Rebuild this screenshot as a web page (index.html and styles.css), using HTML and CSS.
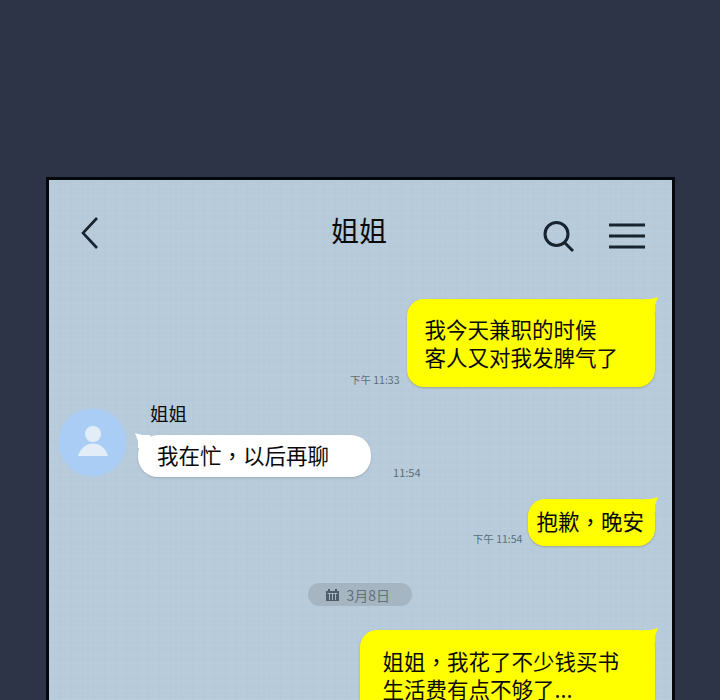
FILE: index.html
```html
<!DOCTYPE html>
<html lang="zh-CN">
<head>
  <meta charset="UTF-8" />
  <title>姐姐</title>
  <link rel="stylesheet" href="styles.css">
</head>
<body>
  <div class="phone">
    <div class="topbar">
      <svg class="back" width="20" height="34" viewBox="0 0 20 34">
        <path d="M17 2 L3 17 L17 32" />
      </svg>
      <div class="title">姐姐</div>
      <svg class="search" width="32" height="34" viewBox="0 0 32 34">
        <circle cx="13.5" cy="14" r="11.5" />
        <path d="M22 23 L30 31" />
      </svg>
      <svg class="menu" width="36" height="26" viewBox="0 0 36 26">
        <path d="M0 2 H36 M0 13 H36 M0 24 H36" />
      </svg>
    </div>

    <div class="chat">
      <div class="row mine first">
        <span class="time">下午 11:33</span>
        <div class="bubble yellow b1">我今天兼职的时候<br>客人又对我发脾气了</div>
      </div>

      <div class="row friend">
        <div class="avatar">
          <svg width="30" height="31" viewBox="0 0 30 31">
            <circle cx="15" cy="8" r="8" />
            <path d="M0 30 C2 22 9 17.5 15 17.5 C21 17.5 28 22 30 30 Z" />
          </svg>
        </div>
        <div class="friend-col">
          <div class="name">姐姐</div>
          <div class="friend-line">
            <div class="bubble white b2">我在忙<span class="punct" lang="zh-TW">&#xFF0C;</span>以后再聊</div>
            <span class="time">11:54</span>
          </div>
        </div>
      </div>

      <div class="row mine third">
        <span class="time">下午 11:54</span>
        <div class="bubble yellow b3">抱歉<span class="punct" lang="zh-TW">&#xFF0C;</span>晚安</div>
      </div>

      <div class="date-row">
        <div class="date">
          <svg width="13" height="12" viewBox="0 0 13 12">
            <path d="M0 2 H13 V12 H0 Z M2 0 H4 V2 H2 Z M9 0 H11 V2 H9 Z" />
            <path class="cut" d="M1.5 4.5 H11.5 M3.5 4.5 V11 M6.5 4.5 V11 M9.5 4.5 V11" />
          </svg>
          <span>3月8日</span>
        </div>
      </div>

      <div class="row mine last">
        <div class="bubble yellow b4">姐姐<span class="punct" lang="zh-TW">&#xFF0C;</span>我花了不少钱买书<br>生活费有点不够了...</div>
      </div>
    </div>
  </div>
</body>
</html>
```

FILE: styles.css
```css
html, body {
  margin: 0;
  height: 700px;
  overflow: hidden;
}

body {
  background: #2e3448;
  font-family: "Noto Sans CJK SC", "Noto Sans", sans-serif;
  color: #0a0a0a;
}

.phone {
  margin: 177px 0 0 46px;
  width: 623px;
  height: 520px;
  overflow: hidden;
  border: 3px solid #06070b;
  border-bottom: none;
  background-color: #b7cbdb;
  background-image:
    repeating-linear-gradient(0deg, rgba(255,255,255,0.05) 0 1px, transparent 1px 9px),
    repeating-linear-gradient(90deg, rgba(90,120,150,0.035) 0 1px, transparent 1px 11px);
}

.topbar {
  height: 119px;
  display: flex;
  align-items: flex-start;
}

.topbar svg {
  fill: none;
  stroke: #17242f;
  flex: none;
}

.back {
  margin: 36px 0 0 31px;
  stroke-width: 2.6;
}

.title {
  margin: 28px 0 0 231px;
  width: 56px;
  font-size: 28px;
  line-height: 44px;
  white-space: nowrap;
}

.search {
  margin: 40px 0 0 156px;
  stroke-width: 3;
}

.menu {
  margin: 43px 0 0 34px;
  stroke-width: 3;
}

.row {
  display: flex;
}

.mine {
  justify-content: flex-end;
  align-items: flex-end;
  padding-right: 17px;
}

.time {
  font-size: 10.5px;
  line-height: 14px;
  color: #5c6d7a;
  white-space: nowrap;
  margin-right: 8px;
}

.third .time {
  margin-right: 6px;
}

.bubble {
  position: relative;
  font-size: 21.5px;
  line-height: 28px;
  white-space: nowrap;
}

.bubble::after {
  content: "";
  position: absolute;
  top: -2px;
  width: 15px;
  height: 15px;
}

.yellow {
  background: #ffff00;
  border-radius: 17px;
  box-shadow: 0 1px 2px rgba(120,120,60,0.45);
}

.yellow::after {
  right: -3px;
  background: #ffff00;
  clip-path: polygon(0 2px, 8px 2px, 100% 0, 12px 8px, 12px 100%, 0 100%);
}

.white {
  background: #fff;
  border-radius: 20px;
  box-shadow: 0 1px 2px rgba(90,100,110,0.3);
}

.white::after {
  left: -3px;
  background: #fff;
  clip-path: polygon(100% 2px, 7px 2px, 0 0, 3px 8px, 3px 100%, 100% 100%);
}

.punct {
  font-family: "Noto Sans CJK TC", sans-serif;
}

.b1 {
  padding: 16px 37px 16px 17px;
}

.b2 {
  padding: 6px 42px 8px 19px;
}

.b3 {
  padding: 8px 11px 11px 8px;
}

.b4 {
  padding: 17px 36px 19px 22px;
}

.friend {
  margin-top: 15px;
  padding-left: 10px;
}

.avatar {
  width: 67px;
  height: 67px;
  margin-top: 7px;
  border-radius: 50%;
  background: #a9cdf4;
  box-shadow: 0 0 3px #a9cdf4;
  display: flex;
  align-items: center;
  justify-content: center;
  flex: none;
}

.avatar svg {
  fill: #e2edf8;
  margin-top: -3px;
}

.friend-col {
  margin-left: 12px;
}

.name {
  padding-left: 12px;
  font-size: 18.5px;
  line-height: 24px;
  margin-top: -1px;
  margin-bottom: 10px;
}

.friend-line {
  display: flex;
  align-items: flex-end;
}

.friend-line .time {
  font-size: 11px;
  margin: 0 0 -2px 22px;
}

.third {
  margin-top: 22px;
}

.date-row {
  margin-top: 37px;
  padding-right: 2px;
  display: flex;
  justify-content: center;
}

.date {
  width: 86px;
  height: 23px;
  padding-left: 18px;
  border-radius: 12px;
  background: #a5b5c2;
  display: flex;
  align-items: center;
  gap: 8px;
  font-size: 14px;
  color: #62707b;
}

.date svg {
  fill: #4f5d69;
}

.date .cut {
  fill: none;
  stroke: #a5b5c2;
  stroke-width: 1;
}

.last {
  margin-top: 24px;
}
```
